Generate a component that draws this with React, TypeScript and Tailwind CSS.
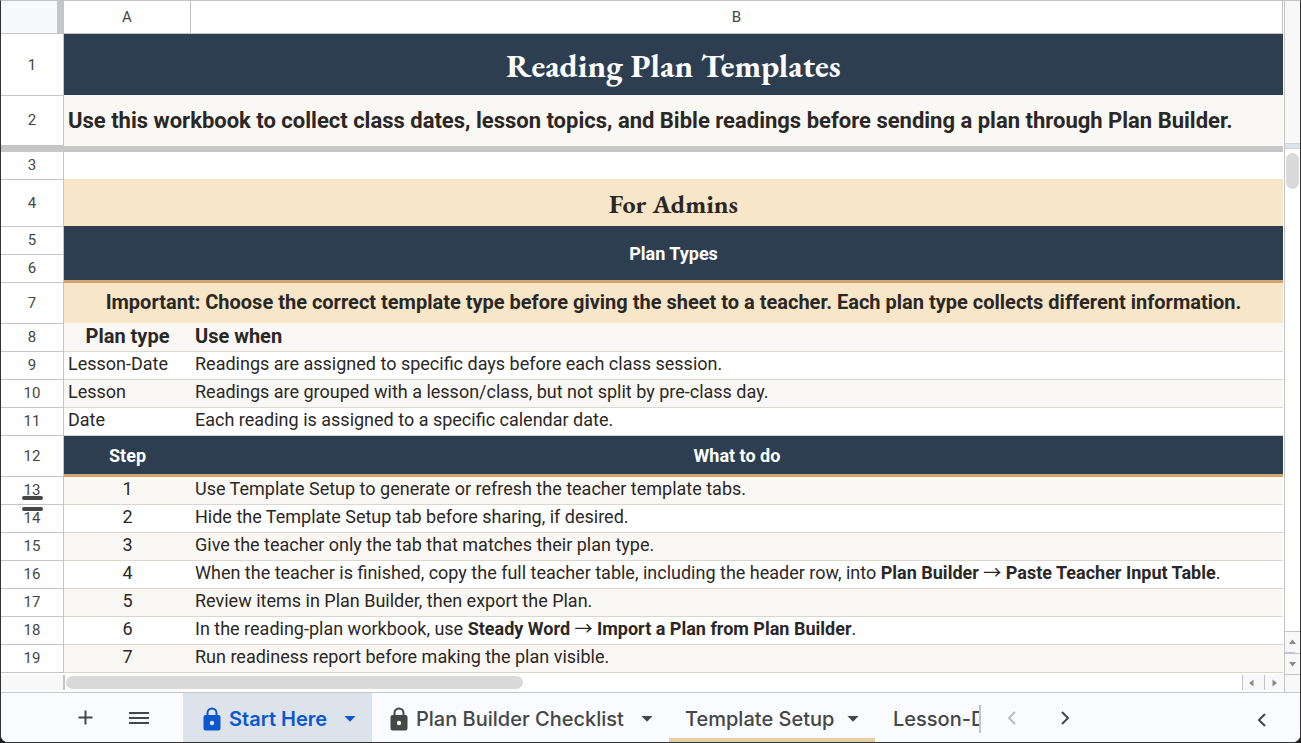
import React from "react";

type Kind = "even" | "odd";

const rowHead =
  "relative border-r border-b border-[#c4c4c4] bg-white p-0 text-center text-[15px] leading-5 font-normal text-[#444746]";

const lineCell: Record<Kind, string> = {
  even: "border-b border-[#dbd7cd] bg-white",
  odd: "border-b border-[#dbd7cd] bg-[#faf8f4]",
};

function RowHead({ n, tall = false, children }: { n: number; tall?: boolean; children?: React.ReactNode }) {
  return (
    <th scope="row" className={`${rowHead} ${tall ? "" : "pb-0.5"}`}>
      {n}
      {children}
    </th>
  );
}

function MenuArrow() {
  return <span className="font-['Noto_Sans_CJK_JP',sans-serif] leading-none font-normal">→</span>;
}

const planTypes = [
  { n: 9, type: "Lesson-Date", use: "Readings are assigned to specific days before each class session." },
  { n: 10, type: "Lesson", use: "Readings are grouped with a lesson/class, but not split by pre-class day." },
  { n: 11, type: "Date", use: "Each reading is assigned to a specific calendar date." },
];

const steps: { n: number; text: React.ReactNode }[] = [
  { n: 1, text: "Use Template Setup to generate or refresh the teacher template tabs." },
  { n: 2, text: "Hide the Template Setup tab before sharing, if desired." },
  { n: 3, text: "Give the teacher only the tab that matches their plan type." },
  {
    n: 4,
    text: (
      <>
        When the teacher is finished, copy the full teacher table, including the header row, into{" "}
        <b>Plan Builder <MenuArrow /> Paste Teacher Input Table</b>.
      </>
    ),
  },
  { n: 5, text: "Review items in Plan Builder, then export the Plan." },
  {
    n: 6,
    text: (
      <>
        In the reading-plan workbook, use <b>Steady Word <MenuArrow /> Import a Plan from Plan Builder</b>.
      </>
    ),
  },
  { n: 7, text: "Run readiness report before making the plan visible." },
];

function Sheet() {
  return (
    <table className="w-full table-fixed border-separate border-spacing-0 text-lg leading-5 text-[#2b2725]">
      <colgroup>
        <col className="w-[63px]" />
        <col className="w-[127px]" />
        <col />
      </colgroup>
      <thead>
        <tr className="h-[33px] text-[15px] text-[#444746]">
          <td className="border-b border-[#c4c4c4] bg-[#f8f9fb] p-0">
            <div className="ml-auto h-8 w-[7px] bg-[#c6c6c6]" />
          </td>
          <th scope="col" className="border-r border-b border-[#c4c4c4] p-0 font-normal">A</th>
          <th scope="col" className="border-r border-b border-[#c4c4c4] p-0 font-normal">B</th>
        </tr>
      </thead>
      <tbody>
        <tr className="h-[62px]">
          <RowHead n={1} tall />
          <td colSpan={2} className="border-b border-[#faf8f4] bg-[#2c3e50] p-0 pt-0.5 text-center font-['EB_Garamond','Liberation_Serif',serif] text-[33px] leading-10 font-bold text-white">
            Reading Plan Templates
          </td>
        </tr>
        <tr className="h-[50px]">
          <RowHead n={2} />
          <td colSpan={2} className="bg-[#faf8f4] p-0 pl-1 text-[22px] leading-7 font-bold whitespace-nowrap">
            Use this workbook to collect class dates, lesson topics, and Bible readings before sending a plan through Plan Builder.
          </td>
        </tr>
        <tr className="h-1.5">
          <td colSpan={3} className="bg-[#c6c6c6] p-0" />
        </tr>
        <tr className="h-7">
          <RowHead n={3} />
          <td colSpan={2} className="border-b border-[#f7e6c8] bg-white p-0" />
        </tr>
        <tr className="h-[47px]">
          <RowHead n={4} tall />
          <td colSpan={2} className="border-b border-[#2c3e50] bg-[#f7e6c8] p-0 pt-0.5 text-center font-['EB_Garamond','Liberation_Serif',serif] text-[26px] leading-8 font-bold">
            For Admins
          </td>
        </tr>
        <tr className="h-7">
          <RowHead n={5} />
          <td colSpan={2} rowSpan={2} className="border-b-3 border-[#d4a373] bg-[#2c3e50] p-0 text-center font-bold text-white">
            Plan Types
          </td>
        </tr>
        <tr className="h-7">
          <RowHead n={6} />
        </tr>
        <tr className="h-[41px]">
          <RowHead n={7} tall />
          <td colSpan={2} className="border-b border-[#faf8f4] bg-[#f7e6c8] p-0 pb-0.5 text-center text-[20px] leading-6 font-bold whitespace-nowrap">
            Important: Choose the correct template type before giving the sheet to a teacher. Each plan type collects different information.
          </td>
        </tr>
        <tr className="h-7 text-[20px]">
          <RowHead n={8} />
          <td className={`${lineCell.odd} p-0 pb-1 text-center font-bold`}>Plan type</td>
          <td className={`${lineCell.odd} p-0 pb-1 pl-1 font-bold`}>Use when</td>
        </tr>
        {planTypes.map((p, i) => (
          <tr key={p.n} className="h-7">
            <RowHead n={p.n} />
            <td className={`${i % 2 ? lineCell.odd : lineCell.even} p-0 pb-1 pl-1`}>{p.type}</td>
            <td className={`${i % 2 ? lineCell.odd : lineCell.even} p-0 pb-1 pl-1`}>{p.use}</td>
          </tr>
        ))}
        <tr className="h-[41px] text-white">
          <RowHead n={12} tall />
          <td className="border-b-3 border-[#d4a373] bg-[#2c3e50] p-0 pt-0.5 text-center font-bold">Step</td>
          <td className="border-b-3 border-[#d4a373] bg-[#2c3e50] p-0 pt-0.5 text-center font-bold">What to do</td>
        </tr>
        {steps.map((s, i) => (
          <tr key={s.n} className="h-7">
            <RowHead n={s.n + 12}>
              {s.n === 1 && <span className="absolute bottom-1 left-[21px] h-1 w-[21px] rounded-full bg-[#444746]" />}
              {s.n === 2 && <span className="absolute top-0.5 left-[21px] h-1 w-[21px] rounded-full bg-[#444746]" />}
            </RowHead>
            <td className={`${i % 2 ? lineCell.even : lineCell.odd} p-0 pb-1 text-center`}>{s.n}</td>
            <td className={`${i % 2 ? lineCell.even : lineCell.odd} p-0 pb-1 pl-1 whitespace-nowrap`}>{s.text}</td>
          </tr>
        ))}
      </tbody>
    </table>
  );
}

const arrowPaths = {
  up: "M1 6 L4.500 1.500 L8 6Z",
  down: "M1 2 L4.500 6.500 L8 2Z",
  left: "M6.500 0.500 L2 4 L6.500 7.500Z",
  right: "M2.500 0.500 L7 4 L2.500 7.500Z",
};

function Arrow({ dir }: { dir: keyof typeof arrowPaths }) {
  return (
    <svg width="9" height="8" viewBox="0 0 9 8" fill="#8a8a8a" aria-hidden="true">
      <path d={arrowPaths[dir]} />
    </svg>
  );
}

function HorizontalScroll() {
  return (
    <div className="flex h-[19px] pt-0.5 pb-0.5">
      <div className="w-16 border-r-2 border-[#c6c6c6] bg-[#f8f8f8]" />
      <div className="flex-1 pt-px pl-px">
        <div className="h-[13px] w-[38.9%] rounded-full bg-[#dadada]" />
      </div>
      <button aria-label="Scroll left" className="flex w-[22px] items-center justify-center border-l border-[#c4c4c4] bg-[#f8f8f8] pr-1">
        <Arrow dir="left" />
      </button>
      <button aria-label="Scroll right" className="flex w-5 items-center justify-center border-l border-[#c4c4c4] bg-[#f8f8f8]">
        <Arrow dir="right" />
      </button>
    </div>
  );
}

function VerticalScroll() {
  return (
    <div className="flex w-4 flex-col border-l border-[#c4c4c4]">
      <div className="h-[142px] bg-[#f8f8f8]" />
      <div className="h-1.5 border-y border-[#d0d4d8] bg-[#dce3eb]" />
      <div className="flex-1 bg-white px-px pt-1">
        <div className="h-9 rounded-full bg-[#dadada]" />
      </div>
      <button aria-label="Scroll up" className="flex h-[22px] flex-col items-center border-t border-[#c4c4c4] bg-[#f8f8f8]">
        <span className="flex flex-1 items-center"><Arrow dir="up" /></span>
        <span className="h-px w-2.5 self-start bg-[#b5c7f0]" />
      </button>
      <button aria-label="Scroll down" className="flex h-[22px] items-center justify-center border-y border-[#c4c4c4] bg-[#f8f8f8]">
        <Arrow dir="down" />
      </button>
      <div className="h-[17px] bg-[#f8f8f8]" />
    </div>
  );
}

function Lock() {
  return (
    <svg className="shrink-0" width="18" height="24" viewBox="0 0 18 24" aria-hidden="true">
      <path
        fill="currentColor"
        fillRule="evenodd"
        d="M2.500 8 H3.500 V5.900 A5.500 5.500 0 0 1 14.500 5.900 V8 H15.500 A2 2 0 0 1 17.500 10 V21.500 A2 2 0 0 1 15.500 23.500 H2.500 A2 2 0 0 1 0.500 21.500 V10 A2 2 0 0 1 2.500 8Z M5.500 8 H12.500 V5.900 A3.500 3.500 0 0 0 5.500 5.900Z M9 13.800 A2.200 2.200 0 1 0 9 18.200 A2.200 2.200 0 1 0 9 13.800Z"
      />
    </svg>
  );
}

function Caret() {
  return (
    <svg className="shrink-0" width="12" height="6" viewBox="0 0 12 6" fill="currentColor" aria-hidden="true">
      <path d="M0.500 0 H11.500 L6 5.700Z" />
    </svg>
  );
}

function Chevron({ dir }: { dir: "left" | "right" }) {
  return (
    <svg width="10" height="14" viewBox="0 0 10 14" fill="none" stroke="currentColor" strokeWidth="2" aria-hidden="true">
      <path d={dir === "left" ? "M8 1 L2 7 L8 13" : "M2 1 L8 7 L2 13"} />
    </svg>
  );
}

function TabBar() {
  return (
    <nav
      aria-label="Sheets"
      className="flex h-[50px] items-stretch border-t border-[#c4c7cc] bg-[#f9fbff] font-[Inter,'Liberation_Sans',sans-serif] text-[20px] leading-6 font-medium whitespace-nowrap text-[#444746]"
    >
      <button aria-label="Add sheet" className="ml-[68px] flex w-8 items-center justify-center">
        <svg width="15" height="15" viewBox="0 0 15 15" stroke="currentColor" strokeWidth="2" aria-hidden="true">
          <path d="M7.500 0.500 V14.500 M0.500 7.500 H14.500" />
        </svg>
      </button>
      <button aria-label="All sheets" className="ml-5 flex w-9 items-center justify-center">
        <svg width="20" height="14" viewBox="0 0 20 14" stroke="currentColor" strokeWidth="2" aria-hidden="true">
          <path d="M0 2 H20 M0 7 H20 M0 12 H20" />
        </svg>
      </button>
      <button aria-current="page" className="ml-[26px] flex w-[189px] items-center bg-[#dce3eb] pt-0.5 pr-4 pl-5 font-semibold text-[#0b57d0]">
        <Lock />
        <span className="ml-2 flex-1 text-left">Start Here</span>
        <Caret />
      </button>
      <button className="flex w-[297px] items-center pt-0.5 pr-4 pl-[18px]">
        <Lock />
        <span className="ml-2 flex-1 text-left">Plan Builder Checklist</span>
        <Caret />
      </button>
      <button className="flex w-[206px] items-center border-b-4 border-[#e7d0a3] pt-1.5 pr-4 pl-4">
        <span className="flex-1 text-left">Template Setup</span>
        <Caret />
      </button>
      <div className="flex w-[106px] items-center pt-0.5">
        <button className="h-7 w-full overflow-hidden border-r-2 border-[#c4c4c4] pl-[18px] text-left">
          <span className="block overflow-hidden">Lesson-Date</span>
        </button>
      </div>
      <button aria-label="Previous sheets" className="ml-[15px] flex w-8 items-center justify-center text-[#b9bbbd]">
        <Chevron dir="left" />
      </button>
      <button aria-label="Next sheets" className="ml-[21px] flex w-8 items-center justify-center">
        <Chevron dir="right" />
      </button>
      <button aria-label="Show side panel" className="mr-5 ml-auto flex w-9 items-center justify-center pt-1">
        <Chevron dir="left" />
      </button>
    </nav>
  );
}

export default function App() {
  return (
    <div className="min-h-screen bg-[#1c1c1c] font-[Roboto,'Liberation_Sans',sans-serif]">
      <div className="flex min-h-screen flex-col overflow-hidden rounded-b-lg border border-t-[#c4c4c4] border-r-[#333333] border-b-[#333333] border-l-[#333333] bg-white">
        <main className="flex flex-1">
          <div className="min-w-0 flex-1">
            <div className="pr-px">
              <Sheet />
            </div>
            <HorizontalScroll />
          </div>
          <VerticalScroll />
        </main>
        <TabBar />
      </div>
    </div>
  );
}
